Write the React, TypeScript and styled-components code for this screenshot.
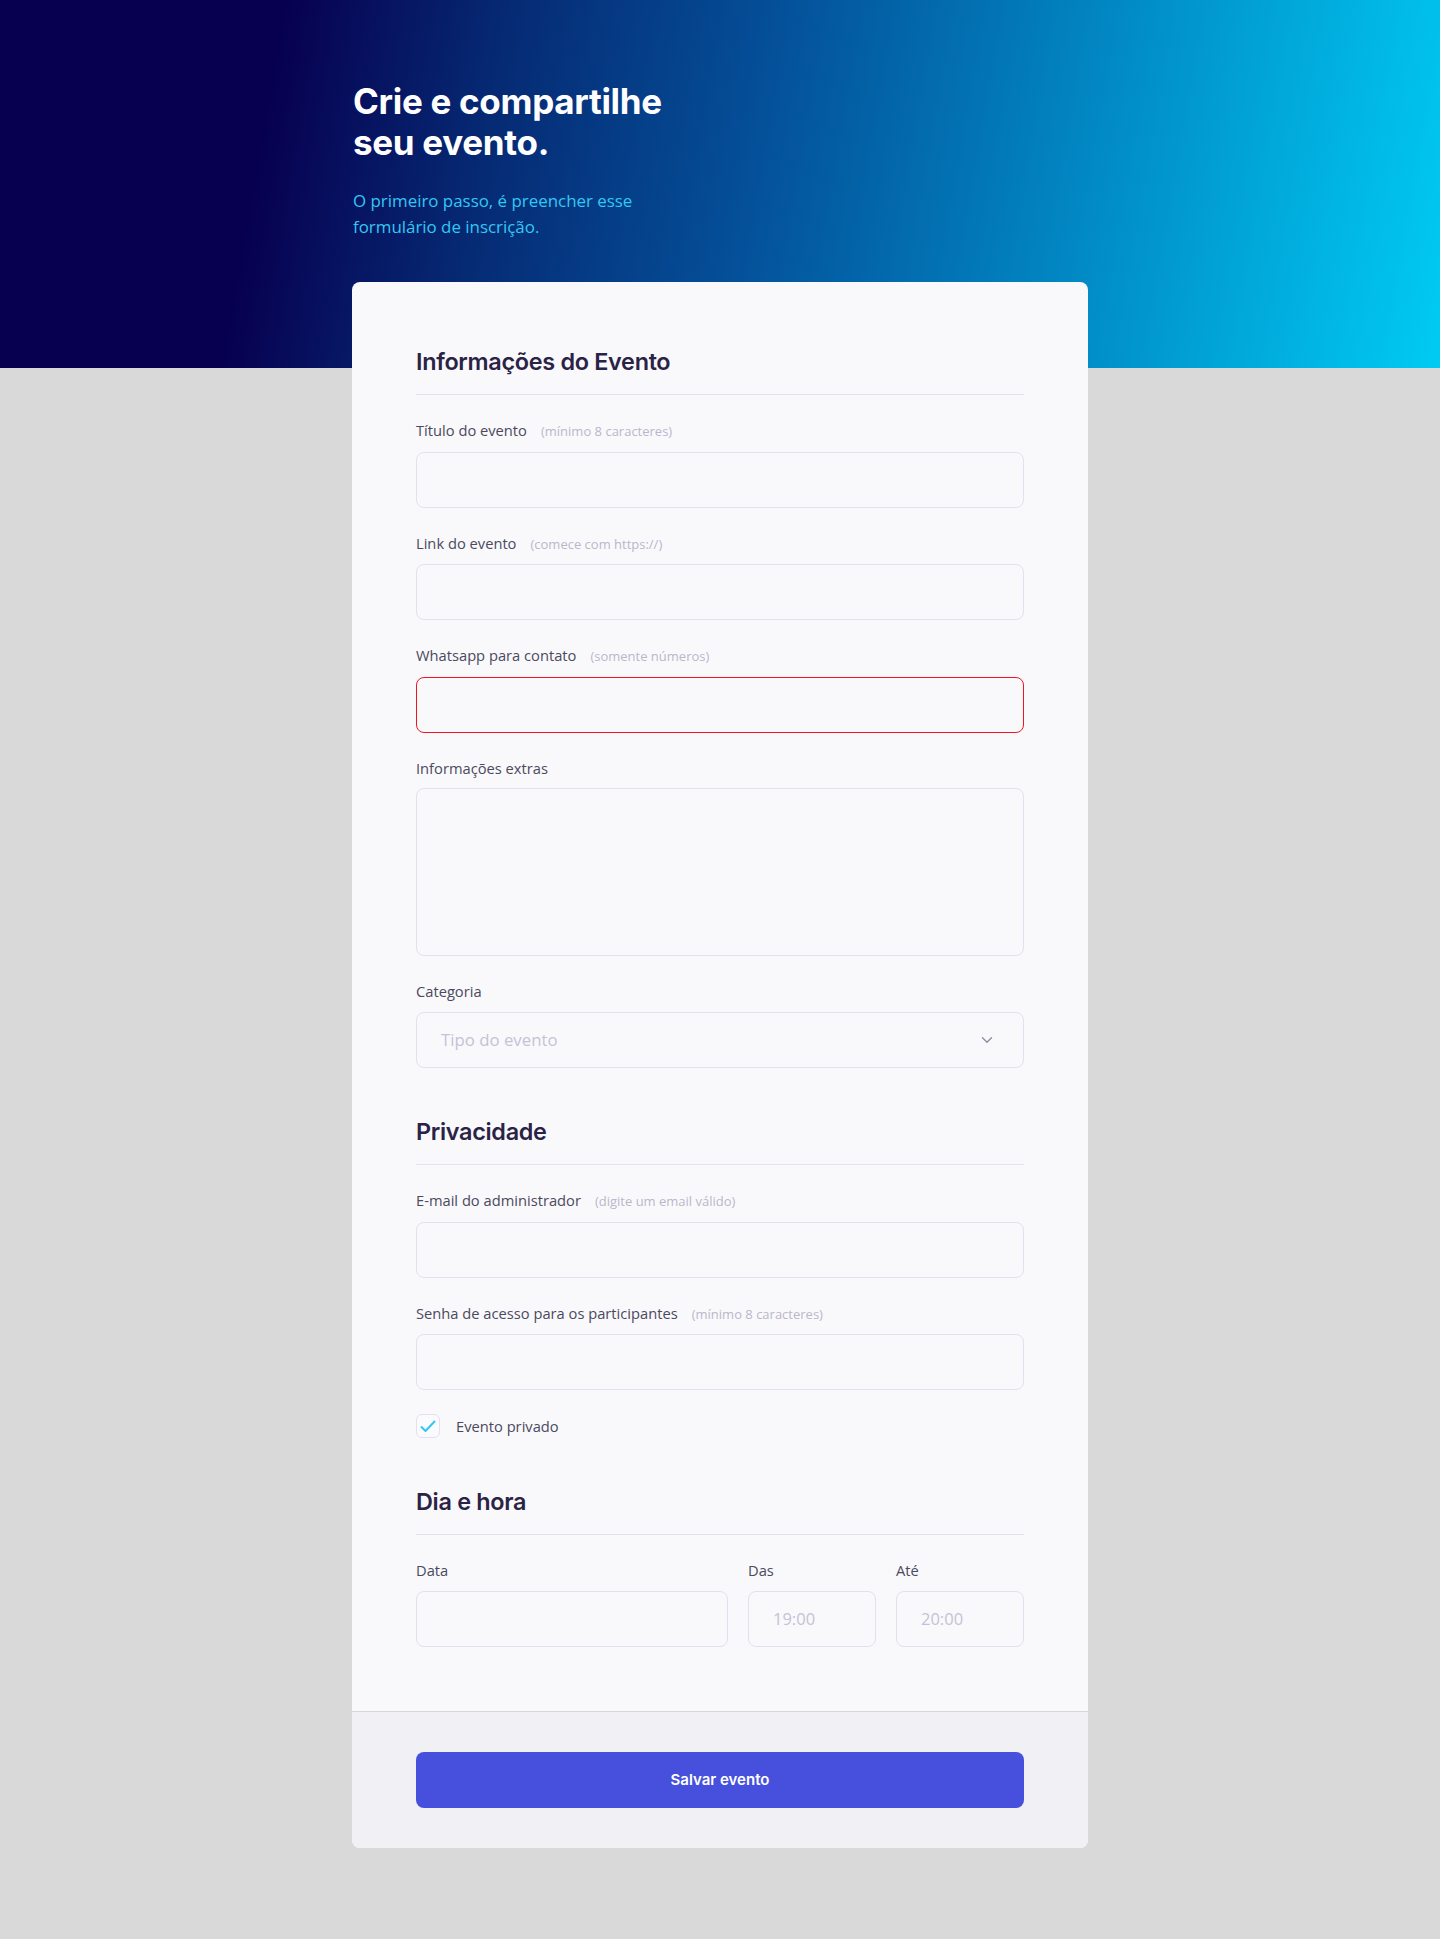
import React from "react";
import styled, { createGlobalStyle } from "styled-components";

const colors = {
	navy: "#070050",
	cyan: "#34c7f2",
	page: "#d9d9d9",
	card: "#f9f9fc",
	footer: "#f0f0f5",
	title: "#2b2346",
	label: "#4b4a5c",
	hint: "#b9b7ca",
	border: "#e2e1ee",
	error: "#f0141e",
	button: "#4650dd",
};

const GlobalStyle = createGlobalStyle`
	* { box-sizing: border-box; }
	body {
		margin: 0;
		background: ${colors.page};
		font-family: "Open Sans", "Noto Sans", sans-serif;
	}
`;

type Field = {
	label: string;
	hint?: string;
	error?: boolean;
	tall?: boolean;
};

const eventFields: Field[] = [
	{ label: "Título do evento", hint: "(mínimo 8 caracteres)" },
	{ label: "Link do evento", hint: "(comece com https://)" },
	{ label: "Whatsapp para contato", hint: "(somente números)", error: true },
	{ label: "Informações  extras", tall: true },
];

const privacyFields: Field[] = [
	{ label: "E-mail do administrador", hint: "(digite um email válido)" },
	{ label: "Senha de acesso para os participantes", hint: "(mínimo 8 caracteres)" },
];

function FieldLabel({ label, hint }: { label: string; hint?: string }) {
	return (
		<Label>
			{label}
			{hint && <Hint>{hint}</Hint>}
		</Label>
	);
}

function TextField({ field }: { field: Field }) {
	return (
		<FieldGroup>
			<FieldLabel label={field.label} hint={field.hint} />
			{field.tall ? <TextArea /> : <Input type="text" $error={field.error} />}
		</FieldGroup>
	);
}

export default function App() {
	return (
		<>
			<GlobalStyle />
			<Page>
				<Wrapper>
					<Hero>
						<HeroTitle>
							Crie e compartilhe
							<br />
							seu evento.
						</HeroTitle>
						<HeroText>
							O primeiro passo, é preencher esse
							<br />
							formulário de inscrição.
						</HeroText>
					</Hero>

					<Card>
						<CardBody>
							<Section>
								<SectionTitle>Informações do Evento</SectionTitle>
								{eventFields.map((field, index) => (
									<TextField field={field} key={index} />
								))}
								<FieldGroup>
									<FieldLabel label="Categoria" />
									<SelectBox>
										<Placeholder>Tipo do evento</Placeholder>
										<svg width="12" height="8" viewBox="0 0 12 8" fill="none">
											<path
												d="M1.5 1.8 6 6.2l4.5-4.4"
												stroke="#8e8ca3"
												strokeWidth="1.4"
												strokeLinecap="round"
												strokeLinejoin="round"
											/>
										</svg>
									</SelectBox>
								</FieldGroup>
							</Section>

							<Section>
								<SectionTitle>Privacidade</SectionTitle>
								{privacyFields.map((field, index) => (
									<TextField field={field} key={index} />
								))}
								<CheckRow>
									<CheckBox>
										<svg width="16" height="13" viewBox="0 0 16 13" fill="none">
											<path
												d="M1.5 7 5.5 11 14.5 1.5"
												stroke={colors.cyan}
												strokeWidth="2"
												strokeLinecap="round"
												strokeLinejoin="round"
											/>
										</svg>
									</CheckBox>
									<CheckLabel>Evento privado</CheckLabel>
								</CheckRow>
							</Section>

							<Section>
								<SectionTitle>Dia e hora</SectionTitle>
								<DateRow>
									<FieldGroup>
										<FieldLabel label="Data" />
										<Input type="text" />
									</FieldGroup>
									<FieldGroup>
										<FieldLabel label="Das" />
										<Input type="text" placeholder="19:00" />
									</FieldGroup>
									<FieldGroup>
										<FieldLabel label="Até" />
										<Input type="text" placeholder="20:00" />
									</FieldGroup>
								</DateRow>
							</Section>
						</CardBody>
						<CardFooter>
							<SaveButton type="button">Salvar evento</SaveButton>
						</CardFooter>
					</Card>
				</Wrapper>
			</Page>
		</>
	);
}

const Page = styled.div`
	min-height: 1939px;
	padding-bottom: 91px;
	background:
		linear-gradient(
				100deg,
				${colors.navy} 0%,
				${colors.navy} 19%,
				#062a74 34%,
				#045099 52%,
				#0278b8 68%,
				#01a2d6 84%,
				#00cbf3 100%
			)
			top / 100% 368px no-repeat,
		${colors.page};
`;

const Wrapper = styled.div`
	width: 736px;
	margin: 0 auto;
`;

const Hero = styled.div`
	padding: 81px 0 42px 1px;
`;

const HeroTitle = styled.h1`
	margin: 0;
	font-family: Inter, "Liberation Sans", sans-serif;
	font-weight: 700;
	font-size: 35px;
	line-height: 41px;
	letter-spacing: -0.3px;
	color: #ffffff;
`;

const HeroText = styled.p`
	margin: 25px 0 0;
	font-size: 16.9px;
	line-height: 26px;
	color: ${colors.cyan};
`;

const Card = styled.div`
	background: ${colors.card};
	border-radius: 8px;
	overflow: hidden;
`;

const CardBody = styled.div`
	display: flex;
	flex-direction: column;
	gap: 24px;
	padding: 64px 64px 40px;
`;

const Section = styled.section`
	display: flex;
	flex-direction: column;
`;

const SectionTitle = styled.h2`
	margin: 0 0 24px;
	padding-bottom: 16px;
	border-bottom: 1px solid #e4e3ec;
	font-family: Inter, "Liberation Sans", sans-serif;
	font-weight: 600;
	font-size: 23.4px;
	line-height: 32px;
	letter-spacing: -0.3px;
	color: ${colors.title};
`;

const FieldGroup = styled.div`
	display: flex;
	flex-direction: column;
	gap: 8px;
	margin-bottom: 24px;
`;

const Label = styled.label`
	display: flex;
	align-items: baseline;
	gap: 14px;
	font-size: 14.7px;
	line-height: 23.6px;
	color: ${colors.label};
`;

const Hint = styled.span`
	font-size: 13px;
	color: ${colors.hint};
`;

const Input = styled.input<{ $error?: boolean }>`
	width: 100%;
	height: 56px;
	padding: 0 24px;
	border: 1px solid ${(p) => (p.$error ? colors.error : colors.border)};
	border-radius: 8px;
	background: ${colors.card};
	font-family: inherit;
	font-size: 16.5px;
	color: ${colors.label};
	outline: none;

	&::placeholder {
		color: #c4c2d6;
	}
`;

const TextArea = styled.textarea`
	width: 100%;
	height: 168px;
	padding: 16px 24px;
	border: 1px solid ${colors.border};
	border-radius: 8px;
	background: ${colors.card};
	font-family: inherit;
	font-size: 16.5px;
	resize: none;
	outline: none;
`;

const SelectBox = styled.div`
	display: flex;
	align-items: center;
	justify-content: space-between;
	height: 56px;
	padding: 0 30px 0 24px;
	border: 1px solid ${colors.border};
	border-radius: 8px;
	background: ${colors.card};
`;

const Placeholder = styled.span`
	font-size: 16.8px;
	color: #c4c2d6;
`;

const CheckRow = styled.div`
	display: flex;
	align-items: center;
	gap: 16px;
	margin-bottom: 24px;
`;

const CheckBox = styled.span`
	display: flex;
	align-items: center;
	justify-content: center;
	width: 24px;
	height: 24px;
	border: 1px solid ${colors.border};
	border-radius: 6px;
	background: #fbfbfe;
`;

const CheckLabel = styled.span`
	font-size: 14.7px;
	color: ${colors.label};
`;

const DateRow = styled.div`
	display: grid;
	grid-template-columns: 1fr 128px 128px;
	gap: 20px;
`;

const CardFooter = styled.div`
	padding: 40px 64px;
	border-top: 1px solid #d6d6da;
	background: ${colors.footer};
`;

const SaveButton = styled.button`
	display: block;
	width: 100%;
	height: 56px;
	border: none;
	border-radius: 8px;
	background: ${colors.button};
	font-family: Inter, "Liberation Sans", sans-serif;
	font-weight: 600;
	font-size: 15px;
	color: #ffffff;
	cursor: pointer;
`;
